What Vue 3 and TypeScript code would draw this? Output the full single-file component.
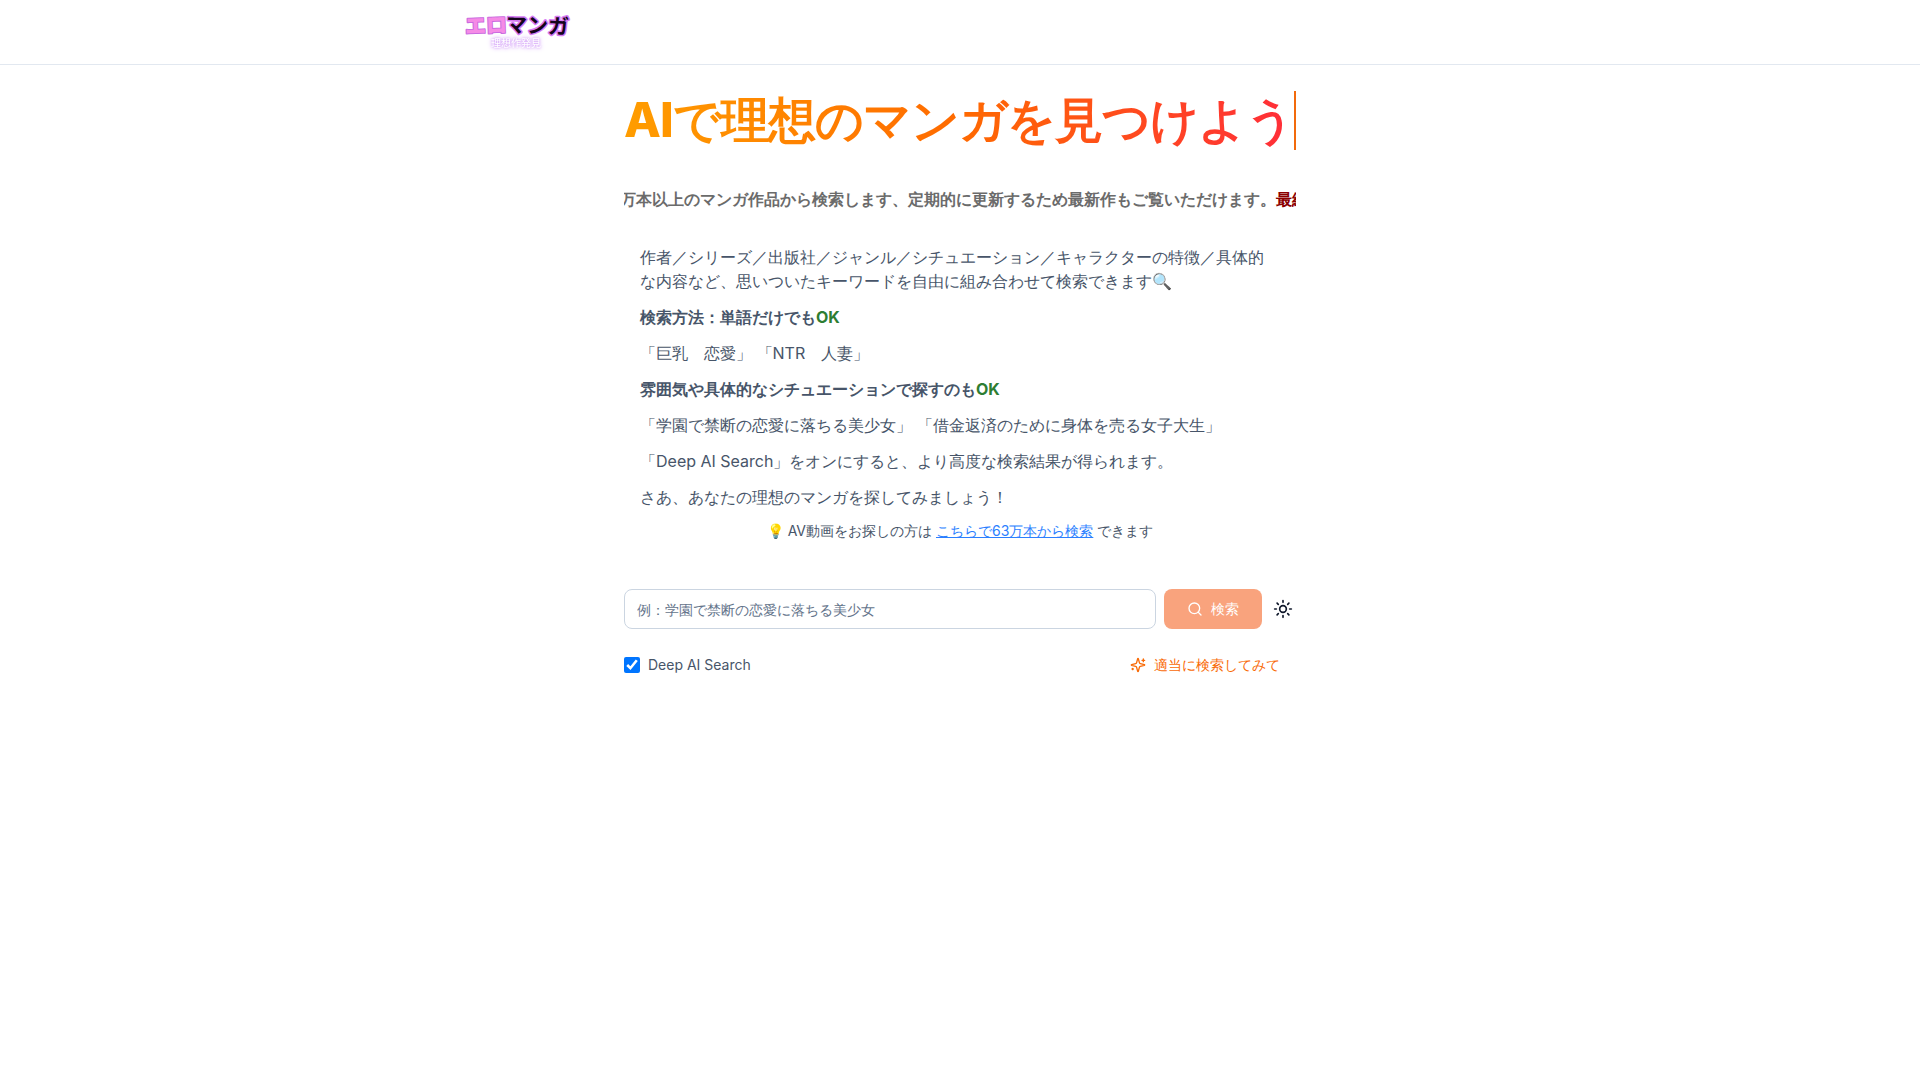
<script setup lang="ts">
import { ref } from 'vue'

const query = ref('')
const deepSearch = ref(true)
const rays = [0, 45, 90, 135, 180, 225, 270, 315]
</script>

<template>
  <header class="site-header">
    <div class="header-inner">
      <a class="logo" href="#" aria-label="エロマンガ 理想作発見">
        <svg width="108" height="40" viewBox="0 0 108 40">
          <text class="logo-pink" x="1" y="21" transform="rotate(-2 20 14)">エロ</text>
          <text class="logo-dark" x="42" y="21" transform="rotate(2 72 14)">マンガ</text>
          <text class="logo-sub" x="27" y="35">理想作発見</text>
        </svg>
      </a>
    </div>
  </header>

  <main class="content">
    <h1 class="title">AIで理想のマンガを見つけよう</h1>

    <div class="ticker">
      <p class="ticker-text">63万本以上のマンガ作品から検索します、定期的に更新するため最新作もご覧いただけます。<span class="ticker-update">最終更新</span></p>
    </div>

    <section class="guide">
      <p>作者／シリーズ／出版社／ジャンル／シチュエーション／キャラクターの特徴／具体的<br />な内容など、思いついたキーワードを自由に組み合わせて検索できます🔍</p>
      <p class="strong">検索方法：単語だけでも<span class="ok">OK</span></p>
      <p>「巨乳　恋愛」 「NTR　人妻」</p>
      <p class="strong">雰囲気や具体的なシチュエーションで探すのも<span class="ok">OK</span></p>
      <p>「学園で禁断の恋愛に落ちる美少女」 「借金返済のために身体を売る女子大生」</p>
      <p>「Deep AI Search」をオンにすると、より高度な検索結果が得られます。</p>
      <p>さあ、あなたの理想のマンガを探してみましょう！</p>
      <p class="note">💡 AV動画をお探しの方は <a href="#">こちらで63万本から検索</a> できます</p>
    </section>

    <form class="search" @submit.prevent>
      <div class="search-row">
        <input v-model="query" class="query" type="text" aria-label="検索キーワード" placeholder="例：学園で禁断の恋愛に落ちる美少女" />
        <button class="submit" type="submit" :disabled="!query">
          <svg class="icon" viewBox="0 0 24 24"><circle cx="11" cy="11" r="8" /><path d="m21 21-4.3-4.3" /></svg>
          検索
        </button>
        <button class="theme" type="button" aria-label="テーマ切り替え">
          <svg class="icon sun" viewBox="0 0 24 24">
            <circle cx="12" cy="12" r="4" />
            <path v-for="r in rays" :key="r" d="M12 2v2" :transform="`rotate(${r} 12 12)`" />
          </svg>
        </button>
      </div>
      <div class="options">
        <label class="deep"><input v-model="deepSearch" type="checkbox" />Deep AI Search</label>
        <button class="random" type="button">
          <svg class="icon" viewBox="0 0 24 24">
            <path d="M9.937 15.5A2 2 0 0 0 8.5 14.063l-6.135-1.582a.5.5 0 0 1 0-.962L8.5 9.936A2 2 0 0 0 9.937 8.5l1.582-6.135a.5.5 0 0 1 .963 0L14.063 8.5A2 2 0 0 0 15.5 9.937l6.135 1.581a.5.5 0 0 1 0 .964L15.5 14.063a2 2 0 0 0-1.437 1.437l-1.582 6.135a.5.5 0 0 1-.963 0z" />
            <path d="M20 3v4M22 5h-4M4 17v2M5 18H3" />
          </svg>
          適当に検索してみて
        </button>
      </div>
    </form>
  </main>
</template>

<style>
body {
  margin: 0;
  background: #fff;
  color: #020817;
  font-family: Inter, sans-serif;
  font-size: 16px;
  line-height: 24px;
}
</style>

<style scoped>
* {
  box-sizing: border-box;
}
p,
h1 {
  margin: 0;
}
button,
input {
  font: inherit;
}
.site-header {
  border-bottom: 1px solid #e2e8f0;
}
.header-inner {
  display: flex;
  align-items: center;
  max-width: 1024px;
  height: 64px;
  margin: 0 auto;
  padding: 0 16px;
}
.logo {
  display: block;
  height: 40px;
}
.logo svg {
  display: block;
  overflow: visible;
}
.logo text {
  font-family: "Noto Sans CJK JP", sans-serif;
  font-size: 21px;
  font-weight: 900;
  paint-order: stroke;
  stroke-linejoin: round;
}
.logo .logo-pink {
  fill: #f58be6;
  stroke: #c96be0;
  stroke-width: 2px;
}
.logo .logo-dark {
  font-weight: 700;
  fill: #14051c;
  stroke: #d77bf5;
  stroke-width: 3px;
}
.logo .logo-sub {
  font-size: 10px;
  font-weight: 400;
  fill: #fff;
  filter: drop-shadow(0 0 1px #d6a4f8) drop-shadow(0 0 2px #dcb4fa);
}
.content {
  max-width: 704px;
  margin: 0 auto;
  padding: 26px 16px;
}
.title {
  height: 59px;
  border-right: 2px solid #f26a0c;
  background: linear-gradient(to right, #ff9d00, #ff6a00 50%, #ff2d3a);
  -webkit-background-clip: text;
  background-clip: text;
  color: transparent;
  font-size: 48px;
  font-weight: 800;
  letter-spacing: -1px;
  line-height: 58px;
  white-space: nowrap;
  overflow: hidden;
}
.ticker {
  display: flex;
  justify-content: flex-end;
  margin-top: 37px;
  overflow: hidden;
}
.ticker-text {
  color: #6b6b6b;
  font-weight: 700;
  white-space: nowrap;
  margin-right: -44px;
}
.ticker-update {
  color: #8b0000;
}
.guide {
  display: flex;
  flex-direction: column;
  gap: 12px;
  margin-top: 34px;
  padding: 0 16px;
  color: #475569;
}
.strong {
  font-weight: 700;
}
.ok {
  color: #2e7d32;
}
.note {
  font-size: 14px;
  line-height: 20px;
  text-align: center;
}
.note a {
  color: #2b7fff;
  text-decoration: underline;
}
.search {
  margin-top: 48px;
}
.search-row {
  display: flex;
  align-items: center;
  gap: 8px;
}
.query {
  flex: 1;
  min-width: 0;
  height: 40px;
  padding: 0 12px;
  border: 1px solid #cbd5e1;
  border-radius: 8px;
  background: #fff;
  color: #0f172a;
  font-size: 14px;
  outline: none;
}
.query::placeholder {
  color: #64748b;
}
button {
  display: flex;
  align-items: center;
  justify-content: center;
  gap: 8px;
  height: 40px;
  border: 0;
  background: none;
  font-size: 14px;
}
.icon {
  width: 16px;
  height: 16px;
  fill: none;
  stroke: currentColor;
  stroke-width: 2;
  stroke-linecap: round;
  stroke-linejoin: round;
}
.submit {
  width: 98px;
  padding: 0;
  border-radius: 8px;
  background: #f9a37d;
  color: #fff;
}
.theme {
  width: 26px;
  padding: 0;
  color: #0f172a;
}
.sun {
  width: 20px;
  height: 20px;
}
.options {
  display: flex;
  align-items: center;
  justify-content: space-between;
  margin-top: 16px;
  color: #475569;
  font-size: 14px;
}
.deep {
  display: flex;
  align-items: center;
  gap: 8px;
}
.deep input {
  width: 16px;
  height: 16px;
  margin: 0;
}
.random {
  padding: 0 16px;
  color: #f96a06;
}
</style>
